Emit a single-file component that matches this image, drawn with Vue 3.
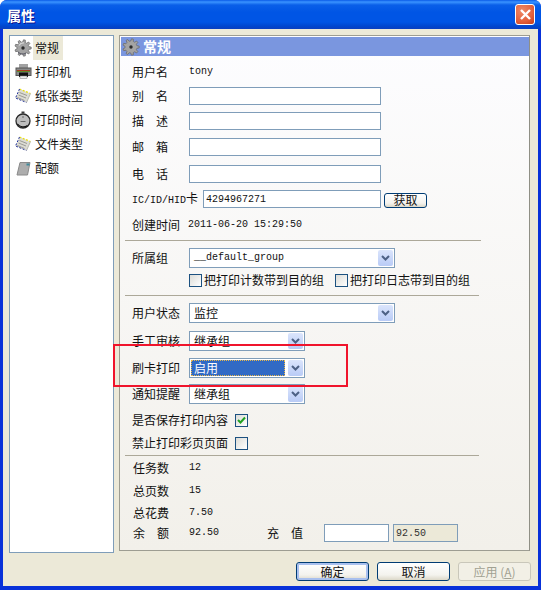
<script setup>
const navItems = [
  { label: '常规', icon: 'gear', active: true },
  { label: '打印机', icon: 'printer' },
  { label: '纸张类型', icon: 'paper' },
  { label: '打印时间', icon: 'watch' },
  { label: '文件类型', icon: 'paper' },
  { label: '配额', icon: 'quota' }
]

// Eight-toothed gear outline, centred on (9, 9)
const gearPath = (() => {
  const pts = []
  const teeth = 9
  for (let i = 0; i < teeth; i++) {
    const a = (i / teeth) * Math.PI * 2
    const step = (Math.PI * 2) / teeth
    const at = (r, t) => `${(9 + r * Math.cos(t)).toFixed(2)} ${(9 + r * Math.sin(t)).toFixed(2)}`
    pts.push(at(6, a - step * 0.32), at(8.2, a - step * 0.16), at(8.2, a + step * 0.16), at(6, a + step * 0.32))
  }
  return 'M' + pts.join('L') + 'Z'
})()
</script>

<template>
  <div class="window">
    <header class="titlebar">
      <span class="title">属性</span>
      <button class="close" aria-label="关闭">
        <svg width="13" height="13" viewBox="0 0 13 13"><path d="M2 2l9 9M11 2l-9 9" stroke="#fff" stroke-width="2.4" fill="none"/></svg>
      </button>
    </header>
    <div class="client">
      <div class="main">
        <ul class="nav">
          <li v-for="item in navItems" :key="item.label" class="nav-item">
            <svg class="icon" width="18" height="18" viewBox="0 0 18 18">
              <template v-if="item.icon === 'gear'">
                <path :d="gearPath" fill="#a4a4a4" stroke="#6d6d6d" stroke-width="0.8"/>
                <path d="M5 6.500a5 5 0 0 1 5-2.500" stroke="#d8d8d8" stroke-width="1.200" fill="none"/>
                <circle cx="9" cy="9" r="1.700" fill="#2b2b2b"/>
                <path d="M4 13a6 6 0 0 0 8 1" stroke="#5a5a68" stroke-width="1" fill="none"/>
              </template>
              <template v-else-if="item.icon === 'printer'">
                <rect x="5" y="1" width="9" height="4" fill="#a2a2a2"/>
                <rect x="2" y="5" width="15" height="7.500" fill="#8b8b8b" stroke="#555" stroke-width="1"/>
                <rect x="3" y="7" width="13" height="1" fill="#a83a20"/>
                <rect x="3" y="8" width="13" height="1" fill="#5f8a2a"/>
                <rect x="5" y="9.500" width="9" height="4.500" fill="#111"/>
                <rect x="6" y="13" width="7" height="2.500" fill="#efefef" stroke="#777" stroke-width="0.500"/>
              </template>
              <template v-else-if="item.icon === 'paper'">
                <path d="M5.500 2l11 4.500-4 9L1.500 11z" fill="#dcdcd4"/>
                <path d="M5.500 2l11 4.500" stroke="#eadf10" stroke-width="1.200" stroke-dasharray="2 1.500" fill="none"/>
                <path d="M5.500 2l-4 9 11 4.500" stroke="#20309a" stroke-width="1" stroke-dasharray="2 1.500" fill="none"/>
                <path d="M5.500 5.500l7.500 3M4.500 8l7.500 3M3.500 10.500l7 3" stroke="#9a9a94" stroke-width="1" fill="none"/>
                <path d="M12.500 15.500l4-9" stroke="#b9b9b0" stroke-width="1" fill="none"/>
              </template>
              <template v-else-if="item.icon === 'watch'">
                <rect x="7.500" y="0.500" width="3" height="2" fill="#3a3a3a"/>
                <circle cx="9" cy="10" r="7" fill="#bdbdbd" stroke="#2a2a2a" stroke-width="1.300"/>
                <path d="M6.500 10.500h5M9 5v2" stroke="#666" stroke-width="1"/>
                <path d="M3.500 13a7 7 0 0 0 10 1.500" stroke="#111" stroke-width="1.200" fill="none"/>
              </template>
              <template v-else>
                <path d="M6 3.500h10l-2.500 12.500H3z" fill="#adadad" stroke="#8a8a8a" stroke-width="1"/>
                <path d="M12.500 4.500h3v2h-3z" fill="#3f8a9c"/>
              </template>
            </svg>
            <span class="nav-label" :class="{ active: item.active }">{{ item.label }}</span>
          </li>
        </ul>

        <section class="panel">
          <h2 class="panel-head">
            <svg class="head-icon" width="18" height="18" viewBox="0 0 18 18">
              <path :d="gearPath" fill="#a4a4a4" stroke="#6d6d6d" stroke-width="0.8"/>
              <circle cx="9" cy="9" r="1.700" fill="#2b2b2b"/>
            </svg>
            常规
          </h2>
          <div class="form">
            <div class="row h24"><span class="label">用户名</span><span class="value mono">tony</span></div>
            <div class="row h24"><span class="label">别　名</span><input class="field wide" /></div>
            <div class="row h25"><span class="label">描　述</span><input class="field wide" /></div>
            <div class="row h28"><span class="label">邮　箱</span><input class="field wide" /></div>
            <div class="row h25"><span class="label">电　话</span><input class="field wide" /></div>
            <div class="row h26">
              <span class="label card-label"><span class="mono">IC/ID/HID</span>卡</span>
              <input class="field card mono" value="4294967271" />
              <button class="btn small">获取</button>
            </div>
            <div class="row h26"><span class="label">创建时间</span><span class="value mono time">2011-06-20 15:29:50</span></div>
            <hr class="sep sep-a" />
            <div class="row h21">
              <span class="label">所属组</span>
              <div class="select long"><span class="sel-text mono">__default_group</span><span class="arrow"><svg width="9" height="6" viewBox="0 0 9 6"><path d="M1 1l3.500 3.500L8 1" stroke="#4d6185" stroke-width="2" fill="none"/></svg></span></div>
            </div>
            <div class="row h24 checks">
              <span class="check-item first"><i class="check"></i>把打印计数带到目的组</span>
              <span class="check-item"><i class="check"></i>把打印日志带到目的组</span>
            </div>
            <hr class="sep sep-b" />
            <div class="row h22">
              <span class="label">用户状态</span>
              <div class="select long"><span class="sel-text">监控</span><span class="arrow"><svg width="9" height="6" viewBox="0 0 9 6"><path d="M1 1l3.500 3.500L8 1" stroke="#4d6185" stroke-width="2" fill="none"/></svg></span></div>
            </div>
            <div class="row h22 gap-top">
              <span class="label">手工审核</span>
              <div class="select short"><span class="sel-text">继承组</span><span class="arrow"><svg width="9" height="6" viewBox="0 0 9 6"><path d="M1 1l3.500 3.500L8 1" stroke="#4d6185" stroke-width="2" fill="none"/></svg></span></div>
            </div>
            <div class="row h31">
              <span class="label">刷卡打印</span>
              <div class="select short"><span class="sel-text selected">启用</span><span class="arrow"><svg width="9" height="6" viewBox="0 0 9 6"><path d="M1 1l3.500 3.500L8 1" stroke="#4d6185" stroke-width="2" fill="none"/></svg></span></div>
            </div>
            <div class="row h22">
              <span class="label">通知提醒</span>
              <div class="select short"><span class="sel-text">继承组</span><span class="arrow"><svg width="9" height="6" viewBox="0 0 9 6"><path d="M1 1l3.500 3.500L8 1" stroke="#4d6185" stroke-width="2" fill="none"/></svg></span></div>
            </div>
            <div class="row h30">
              <span class="label nowrap">是否保存打印内容</span>
              <i class="check on"><svg width="9" height="9" viewBox="0 0 9 9"><path d="M1 4l2.500 2.500L8 1.500" stroke="#21a121" stroke-width="2" fill="none"/></svg></i>
            </div>
            <div class="row h16">
              <span class="label nowrap">禁止打印彩页页面</span>
              <i class="check"></i>
            </div>
            <hr class="sep sep-c" />
            <div class="row h24"><span class="label stat">任务数</span><span class="value mono">12</span></div>
            <div class="row h22"><span class="label stat">总页数</span><span class="value mono">15</span></div>
            <div class="row h22"><span class="label stat">总花费</span><span class="value mono">7.50</span></div>
            <div class="row h18">
              <span class="label stat">余　额</span>
              <span class="value mono balance">92.50</span>
              <span class="recharge-label">充　值</span>
              <input class="field amount" />
              <input class="field amount mono readonly" value="92.50" readonly />
            </div>
          </div>
        </section>
      </div>

      <footer class="footer">
        <button class="btn default">确定</button>
        <button class="btn">取消</button>
        <button class="btn disabled">应用 (<u>A</u>)</button>
      </footer>
    </div>
    <div class="annotation"></div>
  </div>
</template>

<style>
html, body { margin: 0; background: #fff; }
</style>

<style scoped>
.window {
  position: relative;
  width: 541px;
  height: 590px;
  display: flex;
  flex-direction: column;
  box-sizing: border-box;
  background: #0831d9;
  border-radius: 7px 7px 0 0;
  overflow: hidden;
  font: 12px/16px "Noto Sans CJK SC", "Liberation Sans", sans-serif;
  color: #111;
}
.titlebar {
  height: 29px;
  flex: none;
  display: flex;
  align-items: center;
  justify-content: space-between;
  padding: 0 6px 0 7px;
  box-sizing: border-box;
  background: linear-gradient(180deg, #0a5be8 0, #3a93ff 2px, #0a5fe8 5px, #0055e5 12px, #0055e5 22px, #0047cf 26px, #0a3fc0 29px);
}
.title {
  color: #fff;
  font-size: 14px;
  font-weight: 700;
  text-shadow: 1px 1px 0 #0f1089;
  letter-spacing: 0;
}
.close {
  width: 20px;
  height: 21px;
  padding: 0;
  display: flex;
  align-items: center;
  justify-content: center;
  box-sizing: border-box;
  border: 1px solid #fff;
  border-radius: 3px;
  background: radial-gradient(circle at 35% 30%, #ee8a68, #e2603c 60%, #c43a18);
}
.client {
  flex: none;
  height: 557px;
  margin: 0 3px;
  box-sizing: border-box;
  background: #ece9d8;
  padding: 6px 8px 0 6px;
  display: flex;
  flex-direction: column;
}
.main {
  display: flex;
  gap: 5px;
  align-items: flex-start;
}
.nav {
  width: 105px;
  height: 518px;
  flex: none;
  margin: 0;
  padding: 0;
  list-style: none;
  box-sizing: border-box;
  background: #fff;
  border: 1px solid #7f9db9;
}
.nav-item {
  height: 24px;
  display: flex;
  align-items: center;
  padding-left: 4px;
}
.icon { flex: none; }
.nav-label {
  margin-left: 1px;
  padding: 4px 4px 4px 2px;
  white-space: nowrap;
}
.nav-label.active { background: #ece9d8; }
.panel {
  width: 411px;
  height: 516px;
  flex: none;
  box-sizing: border-box;
  border: 1px solid #9d9d92;
  border-right-color: #8f8f85;
  padding-top: 1px;
  background: linear-gradient(180deg, #fdfdff, #f2f0ea);
}
.panel-head {
  height: 19px;
  margin: 0 0 0 1px;
  display: flex;
  align-items: center;
  gap: 3px;
  background: #7a96df;
  color: #fff;
  font-size: 14px;
  font-weight: 700;
  line-height: 19px;
}
.head-icon { margin-left: 1px; }
.form {
  padding: 4px 0 0 5px;
  display: flex;
  flex-direction: column;
}
.row {
  display: flex;
  align-items: center;
  flex: none;
}
.h16 { height: 16px; }
.h18 { height: 18px; }
.h21 { height: 21px; }
.h22 { height: 22px; }
.h24 { height: 24px; }
.h25 { height: 25px; }
.h26 { height: 26px; }
.h28 { height: 28px; }
.h30 { height: 30px; }
.h31 { height: 31px; }
.gap-top { margin-top: 6px; }
.label {
  width: 64px;
  flex: none;
  padding-left: 7px;
  box-sizing: border-box;
  white-space: nowrap;
}
.label.nowrap { width: auto; margin-right: 7px; }
.label.card-label { width: 78px; }
.card-label .mono { font-size: 10px; }
.value { color: #111; }
.mono {
  font-family: "Liberation Mono", "Noto Sans CJK SC", monospace;
  font-size: 10px;
}
.time { margin-left: -1px; }
.field {
  height: 18px;
  margin: 0;
  padding: 0 2px;
  box-sizing: border-box;
  border: 1px solid #7f9db9;
  background: #fff;
  color: #111;
  outline: none;
}
.wide { width: 192px; }
.card { width: 178px; }
.btn {
  width: 73px;
  height: 19px;
  padding: 0;
  box-sizing: border-box;
  border: 1px solid #003c74;
  border-radius: 3px;
  background: linear-gradient(180deg, #fff, #f4f3ee 70%, #dcd8c8);
  font: inherit;
  line-height: 15px;
  color: #111;
}
.small { width: 43px; height: 15px; margin: 2px 0 0 3px; line-height: 12px; }
.sep {
  height: 1px;
  border: 0;
  margin: 0;
  background: #aca899;
}
.sep-a { width: 356px; margin: 2px 0 6px; }
.sep-b { width: 354px; margin: 3px 0 6px; }
.sep-c { width: 354px; margin: 4px 0 0; }
.select {
  height: 20px;
  display: flex;
  align-items: center;
  box-sizing: border-box;
  border: 1px solid #7f9db9;
  background: #fff;
  padding: 1px;
}
.long { width: 206px; }
.short { width: 116px; }
.sel-text {
  flex: 1;
  height: 100%;
  padding-left: 3px;
  display: flex;
  align-items: center;
  min-width: 0;
  overflow: hidden;
}
.sel-text.mono { font-size: 10px; }
.selected {
  background: #316ac5;
  color: #fff;
  outline: 1px dotted #e8b84a;
  outline-offset: -1px;
  margin-right: 3px;
}
.arrow {
  flex: none;
  width: 15px;
  height: 100%;
  display: flex;
  align-items: center;
  justify-content: center;
  border-radius: 2px;
  background: linear-gradient(180deg, #dbe5fc, #b9cbf6);
}
.checks { padding-left: 64px; }
.check-item {
  display: flex;
  align-items: center;
  gap: 2px;
  white-space: nowrap;
}
.check-item.first { width: 146px; flex: none; }
.check {
  width: 13px;
  height: 13px;
  flex: none;
  display: flex;
  align-items: center;
  justify-content: center;
  box-sizing: border-box;
  border: 1px solid #1c5180;
  background: linear-gradient(135deg, #dcdcd7, #fff);
}
.stat { padding-left: 8px; }
.balance { width: 78px; flex: none; }
.recharge-label { width: 57px; flex: none; }
.amount { width: 65px; height: 18px; }
.amount + .amount { margin-left: 4px; }
.readonly { background: #ece9d8; color: #333; }
.footer {
  display: flex;
  gap: 8px;
  justify-content: flex-end;
  padding: 6px 0 0;
  margin-top: 3px;
  margin-right: -1px;
}
.default {
  box-shadow: inset 0 0 0 2px #a9c0ee;
}
.disabled {
  border-color: #c9c7ba;
  color: #a1a192;
  background: #f2f0e6;
}
.annotation {
  position: absolute;
  left: 113px;
  top: 344px;
  width: 235px;
  height: 43px;
  box-sizing: border-box;
  border: 2px solid #f0142c;
  pointer-events: none;
}
</style>
